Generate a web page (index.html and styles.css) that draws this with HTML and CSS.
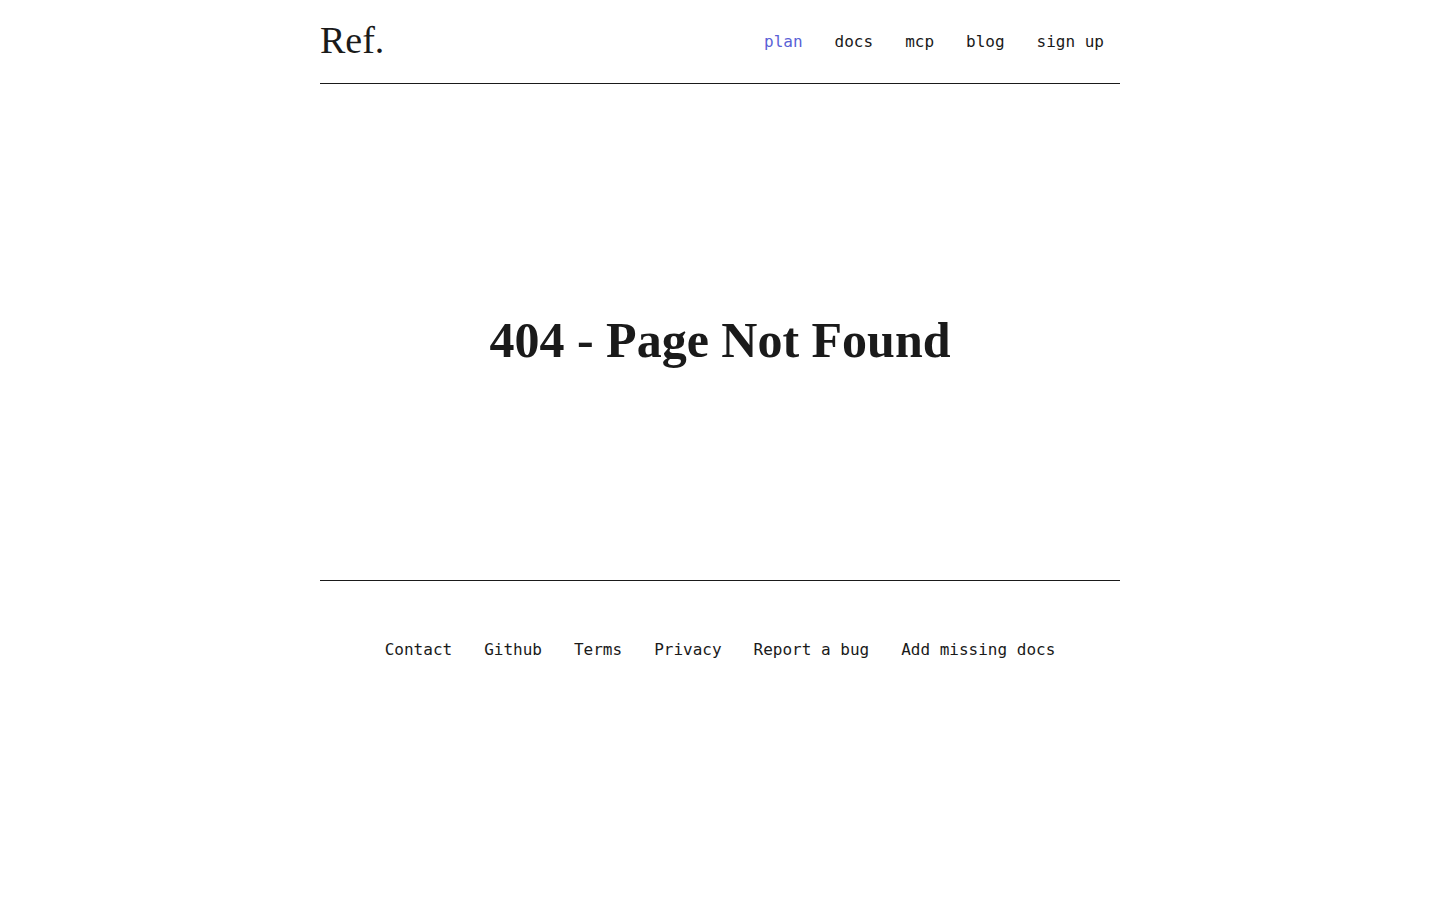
FILE: index.html
```html
<!DOCTYPE html>
<html lang="en">
<head>
<meta charset="utf-8">
<title>404 - Page Not Found</title>
<link rel="stylesheet" href="styles.css">
</head>
<body>
<div class="page">
  <header class="header">
    <a class="logo" href="#">Ref.</a>
    <nav class="nav">
      <a class="nav-link active" href="#">plan</a>
      <a class="nav-link" href="#">docs</a>
      <a class="nav-link" href="#">mcp</a>
      <a class="nav-link" href="#">blog</a>
      <a class="nav-link" href="#">sign up</a>
    </nav>
  </header>
  <main class="main">
    <h1 class="title">404 - Page Not Found</h1>
  </main>
  <footer class="footer">
    <a class="foot-link" href="#">Contact</a>
    <a class="foot-link" href="#">Github</a>
    <a class="foot-link" href="#">Terms</a>
    <a class="foot-link" href="#">Privacy</a>
    <a class="foot-link" href="#">Report a bug</a>
    <a class="foot-link" href="#">Add missing docs</a>
  </footer>
</div>
</body>
</html>
```
FILE: styles.css
```css
* { box-sizing: border-box; }
html, body { margin: 0; padding: 0; background: #fff; }
body { color: #1a1a1a; font-family: "DejaVu Sans Mono", "Liberation Mono", monospace; }
a { color: inherit; text-decoration: none; }

.page { width: 800px; margin: 0 auto; }

.header {
  height: 84px;
  display: flex;
  align-items: center;
  justify-content: space-between;
  border-bottom: 1px solid #1a1a1a;
  padding-bottom: 4px;
}
.logo {
  font-family: "Liberation Serif", "Times New Roman", serif;
  font-size: 38px;
  color: #1a1a1a;
  line-height: 1;
}
.nav { display: flex; margin-top: 4px; }
.nav-link {
  font-size: 16px;
  padding: 0 16px;
  line-height: 24px;
}
.nav-link.active { color: #5a62d6; }

.main {
  height: 497px;
  display: flex;
  align-items: center;
  justify-content: center;
  border-bottom: 1px solid #1a1a1a;
  padding-top: 16px;
}
.title {
  margin: 0;
  font-family: "Liberation Serif", "Times New Roman", serif;
  font-weight: 700;
  font-size: 50px;
  line-height: 1;
}

.footer {
  display: flex;
  justify-content: center;
  padding-top: 57px;
}
.foot-link {
  font-size: 16px;
  line-height: 24px;
  padding: 0 16px;
}
```
